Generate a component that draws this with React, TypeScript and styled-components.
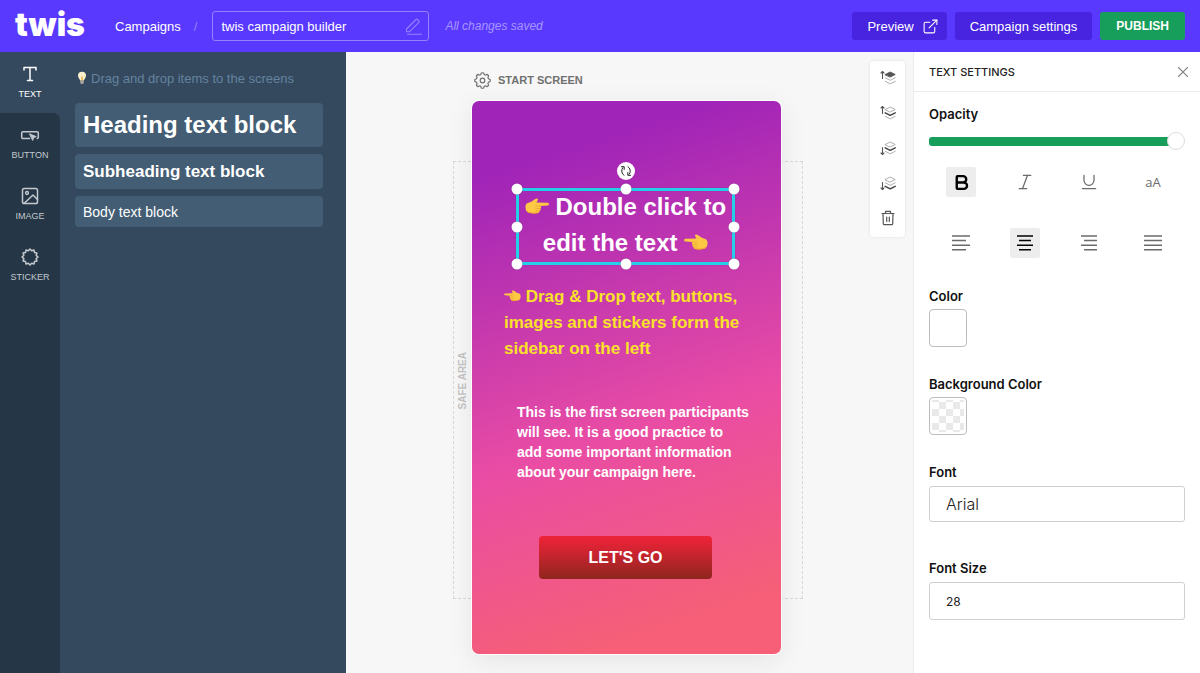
import React from "react";
import styled, { createGlobalStyle, css } from "styled-components";
import { Bold, ExternalLink, Italic, Underline, X } from "lucide-react";

const GlobalStyle = createGlobalStyle`
  *, *::before, *::after { box-sizing: border-box; }
  body {
    margin: 0;
    font-family: "Liberation Sans", Arial, sans-serif;
    background: #f7f7f7;
    color: #1b1b1b;
  }
  button, input, select { font: inherit; color: inherit; margin: 0; }
  button { cursor: pointer; }
`;

const Page = styled.div`
  min-height: 100vh;
  display: flex;
  flex-direction: column;
`;

/* ---------- Top bar ---------- */

const TopBar = styled.header`
  display: flex;
  align-items: center;
  height: 52px;
  padding: 0 15px;
  background: #5a39ff;
  color: #fff;
  font-size: 13px;
`;

const Logo = styled.a`
  width: 68px;
  color: #fff;
  font-family: Inter, sans-serif;
  font-weight: 900;
  font-size: 32px;
  line-height: 50px;
  height: 52px;
  text-decoration: none;
`;

const Crumbs = styled.nav`
  display: flex;
  align-items: center;
  gap: 13px;
  margin-left: 32px;
`;

const CrumbLink = styled.a`
  color: #fff;
  text-decoration: none;
`;

const Slash = styled.span`
  color: #9480ff;
`;

const NameField = styled.label`
  display: flex;
  align-items: center;
  width: 217px;
  height: 30px;
  margin-left: 15px;
  padding: 0 6px 0 8px;
  border: 1px solid #9580ff;
  border-radius: 3px;
`;

const NameInput = styled.input`
  flex: 1;
  min-width: 0;
  padding: 0;
  border: 0;
  outline: 0;
  background: transparent;
`;

const SaveState = styled.span`
  margin-left: 16px;
  font-size: 12px;
  font-style: italic;
  color: #a796ff;
`;

const TopActions = styled.div`
  display: flex;
  align-items: center;
  gap: 8px;
  margin-left: auto;
`;

const TopButton = styled.button<{ $primary?: boolean }>`
  display: flex;
  align-items: center;
  gap: 8px;
  height: 28px;
  padding: 0 15px;
  border: 0;
  border-radius: 3px;
  background: #4824e0;
  color: #fff;
  font-size: 13px;
  white-space: nowrap;
  svg { margin-right: -7px; }
  ${(p) =>
    p.$primary &&
    css`
      padding: 0 16px;
      background: #189e5b;
      font-size: 12px;
      font-weight: 700;
    `}
`;

/* ---------- Left side ---------- */

const Main = styled.main`
  flex: 1;
  display: grid;
  grid-template-columns: 60px 286px minmax(0, 1fr) 287px;
`;

const Rail = styled.nav`
  display: flex;
  flex-direction: column;
  background: #34495e;
`;

const RailRest = styled.div`
  flex: 1;
  background: #253646;
  border-top-right-radius: 7px;
`;

const RailItem = styled.button<{ $active?: boolean }>`
  display: flex;
  flex-direction: column;
  align-items: center;
  gap: 5px;
  width: 60px;
  height: 61px;
  padding: 13px 0 0;
  border: 0;
  background: transparent;
  color: ${(p) => (p.$active ? "#ffffff" : "#c3c9ce")};
  font-size: 9px;
  line-height: 12px;
`;

const Blocks = styled.aside`
  display: flex;
  flex-direction: column;
  gap: 7px;
  padding: 16px 23px 16px 15px;
  background: #34495e;
`;

const Hint = styled.p`
  display: flex;
  align-items: center;
  gap: 2px;
  height: 20px;
  margin: 0 0 8px;
  font-size: 13px;
  white-space: nowrap;
  color: #64839f;
`;

const Block = styled.button<{ $size: number; $height: number; $bold?: boolean }>`
  height: ${(p) => p.$height}px;
  padding: 0 8px;
  border: 0;
  border-radius: 4px;
  background: #435d74;
  color: #fff;
  text-align: left;
  font-size: ${(p) => p.$size}px;
  font-weight: ${(p) => (p.$bold ? 700 : 400)};
`;

/* ---------- Canvas ---------- */

const Canvas = styled.section`
  position: relative;
  display: flex;
  justify-content: center;
  padding: 18px 6px 19px 0;
  background: #f7f7f7;
`;

const Screen = styled.div`
  width: 309px;
`;

const ScreenTitle = styled.h1`
  display: flex;
  align-items: center;
  gap: 7px;
  height: 20px;
  margin: 0 0 11px 2px;
  font-size: 11px;
  font-weight: 700;
  color: #707070;
`;

const Stage = styled.div`
  position: relative;
`;

const SafeArea = styled.div`
  position: absolute;
  left: -19px;
  top: 60px;
  width: 350px;
  height: 438px;
  border: 1px dashed #d8d8d8;
`;

const SafeLabel = styled.span`
  position: absolute;
  left: 3px;
  bottom: 189px;
  writing-mode: vertical-rl;
  transform: rotate(180deg);
  font-size: 10px;
  font-weight: 700;
  line-height: 12px;
  color: #c4c4c4;
`;

const Artboard = styled.div`
  position: relative;
  height: 553px;
  border-radius: 7px;
  background: linear-gradient(162deg, #a024b8 12%, #e94ca4 58%, #f65f77 90%);
  box-shadow: 0 0 0 1px rgba(255, 255, 255, 0.8), 0 6px 28px rgba(0, 0, 0, 0.08);
  color: #fff;
  font-weight: 700;
`;

const Selected = styled.div`
  position: absolute;
  left: 45px;
  top: 88px;
  width: 217px;
  height: 75px;
  font-size: 24px;
  line-height: 36px;
  text-align: center;
  white-space: nowrap;
  &::before {
    content: "";
    position: absolute;
    inset: -1px;
    border: 3px solid #25cfe8;
    box-shadow: 0 0 1px rgba(90, 40, 130, 0.6), inset 0 0 1px rgba(90, 40, 130, 0.6);
  }
`;

const Handle = styled.span<{ $x: number; $y: number }>`
  position: absolute;
  left: ${(p) => p.$x}%;
  top: ${(p) => p.$y}%;
  width: 11px;
  height: 11px;
  border-radius: 50%;
  background: #fff;
  box-shadow: 0 0 1px rgba(60, 20, 90, 0.6);
  transform: translate(-50%, -50%);
`;

const RotateHandle = styled.button`
  position: absolute;
  left: 50%;
  top: -18px;
  display: grid;
  place-items: center;
  width: 18px;
  height: 18px;
  padding: 0;
  border: 0;
  border-radius: 50%;
  background: #fff;
  transform: translate(-50%, -50%);
`;

const YellowText = styled.p`
  position: absolute;
  left: 32px;
  top: 183px;
  width: 256px;
  margin: 0;
  font-size: 17px;
  line-height: 26px;
  color: #f9e229;
`;

const WhiteText = styled.p`
  position: absolute;
  left: 45px;
  top: 301px;
  width: 240px;
  margin: 0;
  font-size: 14px;
  line-height: 20px;
`;

const GoButton = styled.button`
  position: absolute;
  left: 67px;
  top: 435px;
  width: 173px;
  height: 43px;
  padding: 0;
  border: 0;
  border-radius: 4px;
  background: linear-gradient(180deg, #ea2338 8%, #93251f 96%);
  color: #fff;
  font-size: 16px;
  font-weight: 700;
`;

const LayerTools = styled.div`
  position: absolute;
  top: 9px;
  right: 8px;
  display: flex;
  flex-direction: column;
  width: 35px;
  padding-bottom: 1px;
  border-radius: 4px;
  background: #fff;
  box-shadow: 0 0 3px rgba(0, 0, 0, 0.1);
`;

const LayerButton = styled.button`
  display: grid;
  place-items: center;
  height: 35px;
  padding: 0 0 2px;
  border: 0;
  background: transparent;
`;

/* ---------- Settings panel ---------- */

const Settings = styled.aside`
  border-left: 1px solid #ebebeb;
  background: #fff;
  font-family: Inter, "Liberation Sans", sans-serif;
`;

const SettingsHead = styled.div`
  display: flex;
  align-items: center;
  justify-content: space-between;
  height: 40px;
  padding: 0 8px 0 15px;
  border-bottom: 1px solid #ebebeb;
`;

const SettingsTitle = styled.h2`
  margin: 0;
  font-size: 11px;
  font-weight: 500;
  color: #222;
`;

const CloseButton = styled.button`
  display: grid;
  padding: 0;
  border: 0;
  background: transparent;
  color: #888;
`;

const SettingsBody = styled.div`
  display: flex;
  flex-direction: column;
  gap: 28px;
  padding: 13px 15px;
`;

const Field = styled.div<{ $gap?: number }>`
  display: flex;
  flex-direction: column;
  align-items: stretch;
  gap: ${(p) => p.$gap ?? 4}px;
`;

const Fields = styled.div<{ $gap: number }>`
  display: flex;
  flex-direction: column;
  gap: ${(p) => p.$gap}px;
`;

const labelText = css`
  font-size: 13px;
  font-weight: 600;
  line-height: 18px;
  color: #111;
`;

const Label = styled.label`
  ${labelText}
`;

const Caption = styled.span`
  ${labelText}
`;

const Slider = styled.input`
  appearance: none;
  width: 100%;
  height: 18px;
  background: transparent;
  &::-webkit-slider-runnable-track {
    height: 9px;
    border-radius: 3px;
    background: linear-gradient(90deg, #189e5b calc(100% - 9px), transparent 0);
  }
  &::-webkit-slider-thumb {
    appearance: none;
    width: 18px;
    height: 18px;
    margin-top: -5px;
    border-radius: 50%;
    border: 1px solid #dcdcdc;
    background: #fff;
  }
`;

const ToolGrid = styled.div`
  display: grid;
  grid-template-columns: repeat(4, 1fr);
  row-gap: 31px;
  justify-items: center;
  padding: 8px 0 1px;
`;

const Tool = styled.button<{ $on?: boolean }>`
  display: grid;
  place-items: center;
  width: 30px;
  height: 30px;
  padding: 0;
  border: 0;
  border-radius: 2px;
  background: ${(p) => (p.$on ? "#ededed" : "transparent")};
  color: ${(p) => (p.$on ? "#000" : "#6b6b6b")};
  font-family: "Open Sans", sans-serif;
  font-size: 13px;
`;

const Swatch = styled.button<{ $clear?: boolean }>`
  width: 38px;
  height: 38px;
  padding: 2px;
  border: 1px solid #bdbdbd;
  border-radius: 4px;
  background: #fff;
  &::before {
    content: "";
    display: block;
    height: 100%;
    background: ${(p) =>
      p.$clear
        ? "repeating-conic-gradient(#e9e9e9 0 25%, #fff 0 50%) 0 2px / 14px 14px"
        : "#fff"};
  }
`;

const inputBox = css`
  width: 100%;
  padding: 0 16px;
  border: 1px solid #cfcfcf;
  border-radius: 3px;
  background: #fff;
  color: #222;
`;

const Select = styled.select`
  ${inputBox}
  appearance: none;
  height: 36px;
  font-size: 16px;
  font-weight: 300;
`;

const TextInput = styled.input`
  ${inputBox}
  height: 38px;
  font-size: 12px;
`;

/* ---------- Icons ---------- */

const line = {
  fill: "none",
  stroke: "currentColor",
  strokeLinecap: "round" as const,
  strokeLinejoin: "round" as const,
};

const TextIcon = () => (
  <svg width="18" height="18" viewBox="0 0 18 18" {...line} strokeWidth="1.5">
    <path d="M3 5V2.5h12V5M9 2.5v13M6.5 15.5h5" />
  </svg>
);

const ButtonIcon = () => (
  <svg width="20" height="18" viewBox="0 0 20 18" {...line} strokeWidth="1.5">
    <path d="M9.5 12.5H3a1.3 1.3 0 0 1-1.3-1.3V7a1.3 1.3 0 0 1 1.3-1.3h14A1.3 1.3 0 0 1 18.3 7v4.2a1.3 1.3 0 0 1-1 1.3" />
    <path d="M9.8 8l6.4 2.6-2.5 1-.9 2.5z" fill="currentColor" strokeWidth="1" />
  </svg>
);

const ImageIcon = () => (
  <svg width="18" height="18" viewBox="0 0 18 18" {...line} strokeWidth="1.5">
    <rect x="1.5" y="1.5" width="15" height="15" rx="1.8" />
    <circle cx="6" cy="6" r="1.4" />
    <path d="M3.5 16l8.5-8 4.5 4.5" />
  </svg>
);

const ring = (teeth: number, outer: number, inner: number, c: number) =>
  Array.from({ length: teeth * 2 }, (_, i) => {
    const r = i % 2 ? inner : outer;
    const a = (Math.PI * i) / teeth - Math.PI / 2;
    return `${(c + r * Math.cos(a)).toFixed(2)},${(c + r * Math.sin(a)).toFixed(2)}`;
  }).join(" ");

const StickerIcon = () => (
  <svg width="18" height="18" viewBox="0 0 18 18" {...line} strokeWidth="1.5">
    <polygon points={ring(12, 8, 6.4, 9)} />
  </svg>
);

const gearPath = () => {
  const at = (r: number, deg: number) => {
    const a = ((deg - 90) * Math.PI) / 180;
    return `${(8.5 + r * Math.cos(a)).toFixed(2)} ${(8.5 + r * Math.sin(a)).toFixed(2)}`;
  };
  let d = `M${at(7.6, -9)}`;
  for (let i = 0; i < 8; i++) {
    const b = i * 45;
    d += `Q${at(8, b)} ${at(7.6, b + 9)}L${at(6.5, b + 13)}Q${at(5.7, b + 22.5)} ${at(6.5, b + 32)}L${at(7.6, b + 36)}`;
  }
  return d + "Z";
};

const GearIcon = () => (
  <svg width="17" height="17" viewBox="0 0 17 17" {...line} strokeWidth="1.2">
    <path d={gearPath()} />
    <circle cx="8.5" cy="8.5" r="2.3" />
  </svg>
);

const PencilIcon = () => (
  <svg width="17" height="17" viewBox="0 0 17 17" {...line} stroke="#9580ff" strokeWidth="1.1">
    <path d="M1.500 11L11 1.500a1 1 0 0 1 1.400 0l1.500 1.500a1 1 0 0 1 0 1.400L4.600 13.700H1.500z M2.500 16.200h14" />
  </svg>
);

const BulbIcon = () => (
  <svg width="14" height="14" viewBox="0 0 14 14" role="img" aria-label="Tip">
    <path d="M7 .8a4 4 0 0 0-4 4c0 2 1.700 2.800 2 4.800h4c.3-2 2-2.800 2-4.800a4 4 0 0 0-4-4z" fill="#fdf0cf" />
    <path d="M6 5l1 1 1-1v4.500H6z" fill="#f3c268" />
    <path d="M5.200 9.600h3.600v2.200L8 13H6l-.8-1.200z" fill="#a8a39c" />
  </svg>
);

const RotateIcon = () => (
  <svg width="12" height="12" viewBox="0 0 12 12" {...line} stroke="#222" strokeWidth="1">
    <path d="M4 10.300A5 5 0 0 1 2.700 2.800M8 1.700a5 5 0 0 1 1.300 7.500" />
    <path d="M1.500 1.700h2.700v2.700M10.500 10.300H7.800V7.600" />
  </svg>
);

const HandSvg = styled.svg<{ $flip?: boolean }>`
  vertical-align: baseline;
  transform: ${(p) => (p.$flip ? "scaleX(-1)" : "none")};
`;

const Hand = ({ size, flip }: { size: number; flip?: boolean }) => (
  <HandSvg
    $flip={flip}
    width={size}
    height={Math.round((size * 17) / 24)}
    viewBox="0 0 24 17"
    role="img"
    aria-label={flip ? "Pointing left" : "Pointing right"}
  >
    <path
      d="M.5 8.500C.5 5.500 2.500 4.500 5 4.200 7.500 3.500 8.500 1.500 11 .7c1.500-.4 2.500.6 1.700 1.700L11.500 4.600l11.300.2c1.500.2 1.500 2.500 0 2.600L15.500 8c1 .6.9 2-.1 2.500.6.9.1 2.100-.9 2.400.2 1.200-.6 2-2 2.200-3.500.5-7.500.4-9.800-.8C.9 13.200.5 11 .5 8.500z"
      fill="#fdc843"
    />
    <path
      d="M15.500 8l-4.500.2M15.400 10.500l-4.400.1M14.500 12.900l-3.500-.1"
      fill="none"
      stroke="#e39a2c"
      strokeWidth=".6"
      strokeLinecap="round"
    />
    <path d="M2 13.500c2.500 1.700 7 1.900 11 1.300" fill="none" stroke="#ee9f25" strokeWidth=".9" />
  </HandSvg>
);

const LayerIcon = ({ up, level, solid }: { up?: boolean; level: number; solid?: boolean }) => {
  const tone = (n: number) => (n === level ? "#444" : "#a5a5a5");
  const weight = (n: number) => (n === level ? 1.5 : 0.9);
  return (
    <svg width="16" height="16" viewBox="0 0 16 16" {...line}>
      <path
        d={up ? "M2.500 8.500v-7M1 3l1.500-1.500L4 3" : "M2.500 7.500v7M1 13l1.500 1.500L4 13"}
        stroke="#555"
        strokeWidth="1.100"
      />
      <path
        d="M5.200 4.500L10.200 2l5 2.500-5 2.500z"
        fill={solid ? "#555" : "none"}
        stroke={solid ? "#555" : "#a5a5a5"}
        strokeWidth=".9"
      />
      <path d="M5.200 7.800l5 2.500 5-2.500" stroke={tone(1)} strokeWidth={weight(1)} />
      <path d="M5.200 11.300l5 2.500 5-2.500" stroke={tone(2)} strokeWidth={weight(2)} />
    </svg>
  );
};

const TrashIcon = () => (
  <svg width="14" height="16" viewBox="0 0 14 16" {...line} stroke="#555" strokeWidth="1.200">
    <path d="M1 3.500h12M4.500 3.500V1.300h5v2.200M2 3.500l.3 10.200a1 1 0 0 0 1 1h7.400a1 1 0 0 0 1-1L12 3.500M5.700 7v4.500M8.300 7v4.500" />
  </svg>
);

type Align = "left" | "center" | "right" | "justify";

const alignPaths: Record<Align, string> = {
  left: "M0 1h18M0 5.600h14M0 10.200h18M0 14.800h14",
  center: "M1 1h16M3 5.600h12M1 10.200h16M3 14.800h12",
  right: "M1 1h16M4 5.600h13M1 10.200h16M4 14.800h13",
  justify: "M0 1h18M0 5.600h18M0 10.200h18M0 14.800h18",
};

const AlignIcon = ({ kind }: { kind: Align }) => (
  <svg width="18" height="16" viewBox="0 0 18 16" fill="none" stroke="currentColor" strokeWidth="1.5">
    <path d={alignPaths[kind]} />
  </svg>
);

const handles: [number, number][] = [
  [0, 0], [50, 0], [100, 0],
  [0, 50], [100, 50],
  [0, 100], [50, 100], [100, 100],
];

const aligns: Align[] = ["left", "center", "right", "justify"];

export default function App() {
  return (
    <Page>
      <GlobalStyle />
      <TopBar>
        <Logo href="#">twis</Logo>
        <Crumbs>
          <CrumbLink href="#">Campaigns</CrumbLink>
          <Slash>/</Slash>
        </Crumbs>
        <NameField>
          <NameInput aria-label="Campaign name" defaultValue="twis campaign builder" />
          <PencilIcon />
        </NameField>
        <SaveState>All changes saved</SaveState>
        <TopActions>
          <TopButton type="button">
            Preview
            <ExternalLink size={17} strokeWidth={1.5} />
          </TopButton>
          <TopButton type="button">Campaign settings</TopButton>
          <TopButton type="button" $primary>PUBLISH</TopButton>
        </TopActions>
      </TopBar>

      <Main>
        <Rail>
          <RailItem type="button" $active><TextIcon />TEXT</RailItem>
          <RailRest>
            <RailItem type="button"><ButtonIcon />BUTTON</RailItem>
            <RailItem type="button"><ImageIcon />IMAGE</RailItem>
            <RailItem type="button"><StickerIcon />STICKER</RailItem>
          </RailRest>
        </Rail>

        <Blocks>
          <Hint><BulbIcon />Drag and drop items to the screens</Hint>
          <Block type="button" $size={24} $height={44} $bold>Heading text block</Block>
          <Block type="button" $size={17} $height={35} $bold>Subheading text block</Block>
          <Block type="button" $size={14} $height={31}>Body text block</Block>
        </Blocks>

        <Canvas>
          <Screen>
            <ScreenTitle><GearIcon />START SCREEN</ScreenTitle>
            <Stage>
              <SafeArea><SafeLabel>SAFE AREA</SafeLabel></SafeArea>
              <Artboard>
                <Selected>
                  <Hand size={24} /> Double click to<br />
                  edit the text <Hand size={24} flip />
                  {handles.map(([x, y]) => (
                    <Handle key={`${x}-${y}`} $x={x} $y={y} />
                  ))}
                  <RotateHandle type="button" aria-label="Rotate"><RotateIcon /></RotateHandle>
                </Selected>
                <YellowText>
                  <Hand size={17} flip /> Drag &amp; Drop text, buttons,<br />
                  images and stickers form the<br />
                  sidebar on the left
                </YellowText>
                <WhiteText>
                  This is the first screen participants<br />
                  will see. It is a good practice to<br />
                  add some important information<br />
                  about your campaign here.
                </WhiteText>
                <GoButton type="button">LET'S GO</GoButton>
              </Artboard>
            </Stage>
          </Screen>
          <LayerTools>
            <LayerButton type="button" aria-label="Bring to front"><LayerIcon up level={0} solid /></LayerButton>
            <LayerButton type="button" aria-label="Bring forward"><LayerIcon up level={1} /></LayerButton>
            <LayerButton type="button" aria-label="Send backward"><LayerIcon level={1} /></LayerButton>
            <LayerButton type="button" aria-label="Send to back"><LayerIcon level={2} /></LayerButton>
            <LayerButton type="button" aria-label="Delete"><TrashIcon /></LayerButton>
          </LayerTools>
        </Canvas>

        <Settings>
          <SettingsHead>
            <SettingsTitle>TEXT SETTINGS</SettingsTitle>
            <CloseButton type="button" aria-label="Close"><X size={18} strokeWidth={1.5} /></CloseButton>
          </SettingsHead>
          <SettingsBody>
            <Fields $gap={9}>
              <Field $gap={9}>
                <Label htmlFor="opacity">Opacity</Label>
                <Slider id="opacity" type="range" min={0} max={100} defaultValue={100} />
              </Field>
              <ToolGrid>
                <Tool type="button" $on aria-label="Bold"><Bold size={19} strokeWidth={3} /></Tool>
                <Tool type="button" aria-label="Italic"><Italic size={20} strokeWidth={1.5} /></Tool>
                <Tool type="button" aria-label="Underline"><Underline size={20} strokeWidth={1.5} /></Tool>
                <Tool type="button">aA</Tool>
                {aligns.map((kind) => (
                  <Tool key={kind} type="button" $on={kind === "center"} aria-label={`Align ${kind}`}>
                    <AlignIcon kind={kind} />
                  </Tool>
                ))}
              </ToolGrid>
            </Fields>
            <Field>
              <Caption id="color">Color</Caption>
              <Swatch type="button" aria-labelledby="color" />
            </Field>
            <Field>
              <Caption id="bg-color">Background Color</Caption>
              <Swatch type="button" aria-labelledby="bg-color" $clear />
            </Field>
            <Fields $gap={37}>
              <Field $gap={5}>
                <Label htmlFor="font">Font</Label>
                <Select id="font" defaultValue="Arial">
                  <option>Arial</option>
                </Select>
              </Field>
              <Field $gap={5}>
                <Label htmlFor="font-size">Font Size</Label>
                <TextInput id="font-size" inputMode="numeric" defaultValue="28" />
              </Field>
            </Fields>
          </SettingsBody>
        </Settings>
      </Main>
    </Page>
  );
}
